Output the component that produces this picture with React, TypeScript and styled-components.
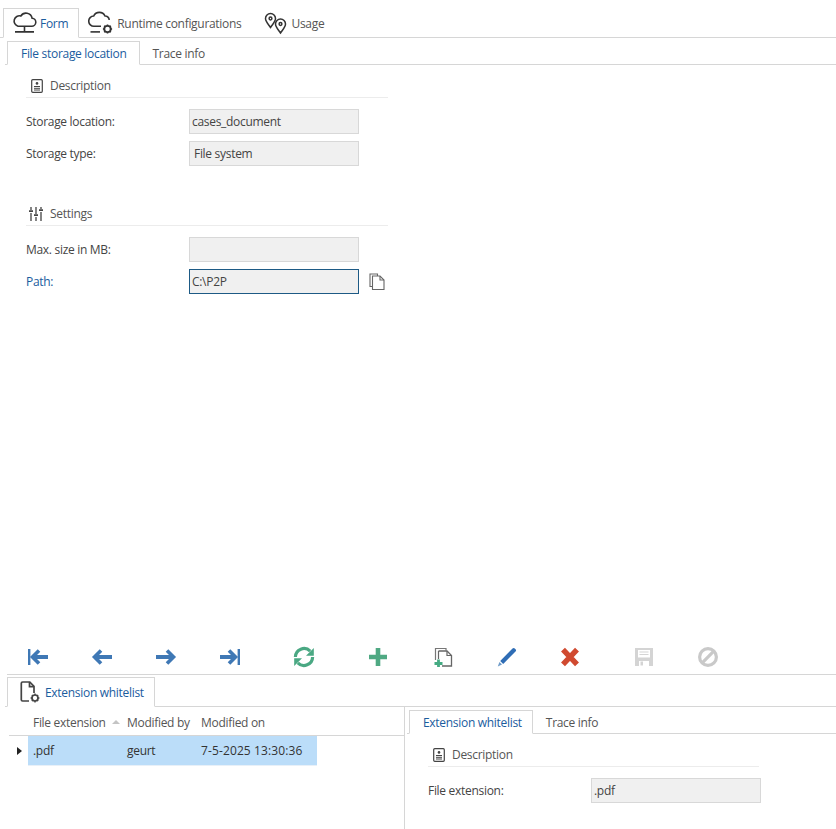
import * as React from "react";
import styled, { createGlobalStyle } from "styled-components";

const GlobalStyle = createGlobalStyle`
  html, body {
    margin: 0;
    padding: 0;
    background: #fff;
  }
  body {
    font-family: "Open Sans", "Noto Sans", sans-serif;
    font-size: 12px;
    letter-spacing: -0.3px;
    color: #444;
  }
  * {
    box-sizing: border-box;
  }
`;

const Page = styled.div`
  width: 836px;
  height: 829px;
  display: flex;
  flex-direction: column;
  overflow: hidden;
`;

const TopArea = styled.div`
  flex: 1;
  min-height: 0;
`;

const MainTabs = styled.div`
  display: flex;
  align-items: flex-end;
  height: 38px;
  padding: 8px 0 0 3px;
  border-bottom: 1px solid #d6d6d6;
`;

const MainTab = styled.div<{ $active?: boolean; $pad: number }>`
  display: flex;
  align-items: center;
  height: 30px;
  padding: 0 10px 0 ${(p) => p.$pad}px;
  margin-bottom: -1px;
  border: 1px solid ${(p) => (p.$active ? "#d6d6d6" : "transparent")};
  border-bottom-color: ${(p) => (p.$active ? "#fff" : "transparent")};
  color: ${(p) => (p.$active ? "#1b5c9e" : "#555")};
  white-space: nowrap;

  svg {
    margin-right: 3px;
    flex: none;
  }
`;

const SubTabs = styled.div<{ $top: number; $left: number }>`
  display: flex;
  align-items: flex-end;
  margin: ${(p) => p.$top}px 0 0 ${(p) => p.$left}px;
  padding-left: 2px;
  border-bottom: 1px solid #d6d6d6;
`;

const SubTab = styled.div<{ $active?: boolean; $right?: number }>`
  display: flex;
  align-items: center;
  height: 24px;
  padding: 0 ${(p) => p.$right ?? 12}px 0 ${(p) => (p.$active ? 13 : 12)}px;
  margin-bottom: -1px;
  border: 1px solid ${(p) => (p.$active ? "#d6d6d6" : "transparent")};
  border-bottom-color: ${(p) => (p.$active ? "#fff" : "transparent")};
  color: ${(p) => (p.$active ? "#1b5c9e" : "#555")};
  white-space: nowrap;
`;

const Section = styled.section<{ $top: number; $left: number; $width: number }>`
  width: ${(p) => p.$width}px;
  margin: ${(p) => p.$top}px 0 0 ${(p) => p.$left}px;
`;

const SectionHead = styled.div<{ $iconWidth: number; $iconLeft: number }>`
  display: flex;
  align-items: center;
  height: 22px;
  padding: 0 0 2px ${(p) => p.$iconLeft}px;
  margin-bottom: 11px;
  border-bottom: 1px solid #ececec;
  color: #555;

  svg {
    width: ${(p) => p.$iconWidth}px;
    flex: none;
    margin-right: 7px;
  }
`;

const FormRow = styled.div`
  display: flex;
  align-items: center;
  height: 25px;
  margin-bottom: 7px;
`;

const Label = styled.label<{ $accent?: boolean; $width: number }>`
  width: ${(p) => p.$width}px;
  flex: none;
  color: ${(p) => (p.$accent ? "#1b5c9e" : "#444")};
`;

const Field = styled.div<{ $focused?: boolean; $indent?: number }>`
  width: 170px;
  height: 25px;
  flex: none;
  display: flex;
  align-items: center;
  padding-left: ${(p) => p.$indent ?? 2}px;
  background: #f0f0f0;
  border: 1px solid ${(p) => (p.$focused ? "#1d5a85" : "#d8d8d8")};
  color: #444;
`;

const CopyButton = styled.span`
  display: flex;
  margin-left: 10px;
`;

const Toolbar = styled.div`
  display: flex;
  align-items: center;
  height: 35px;
  margin-left: 7px;
  border-bottom: 1px solid #d6d6d6;
`;

const ToolButton = styled.span<{ $left?: number }>`
  width: 24px;
  height: 24px;
  flex: none;
  margin-left: ${(p) => p.$left ?? 40}px;
  display: flex;
`;

const BottomArea = styled.div`
  height: 154px;
  display: flex;
  flex-direction: column;
`;

const BottomTabs = styled.div`
  display: flex;
  align-items: flex-end;
  height: 32px;
  flex: none;
  margin-left: 5px;
  padding-left: 2px;
  border-bottom: 1px solid #d6d6d6;
`;

const BottomTab = styled.div`
  display: flex;
  align-items: center;
  height: 30px;
  padding: 0 10px 0 12px;
  margin-bottom: -1px;
  border: 1px solid #d6d6d6;
  border-bottom-color: #fff;
  color: #1b5c9e;

  svg {
    margin-right: 5px;
  }
`;

const Split = styled.div`
  flex: 1;
  display: flex;
  min-height: 0;
`;

const GridPane = styled.div`
  width: 405px;
  flex: none;
  border-right: 1px solid #d6d6d6;
  padding-left: 9px;
`;

const DetailPane = styled.div`
  flex: 1;
`;

const GridHeader = styled.div`
  display: flex;
  align-items: center;
  height: 29px;
  padding: 2px 0 0 24px;
  border-bottom: 1px solid #d6d6d6;
  color: #555;
`;

const HeaderCell = styled.div<{ $width: number }>`
  width: ${(p) => p.$width}px;
  flex: none;
  display: flex;
  align-items: center;
  white-space: nowrap;
`;

const SortArrow = styled.span`
  width: 0;
  height: 0;
  margin-left: 6px;
  border-left: 4px solid transparent;
  border-right: 4px solid transparent;
  border-bottom: 4px solid #c4c4c4;
`;

const GridRow = styled.div`
  display: flex;
  align-items: center;
`;

const RowMarker = styled.span`
  width: 19px;
  flex: none;
  display: flex;
  justify-content: flex-end;
  padding-right: 6px;

  &::before {
    content: "";
    border-top: 4.5px solid transparent;
    border-bottom: 4.5px solid transparent;
    border-left: 5px solid #222;
  }
`;

const SelectedCells = styled.div`
  width: 289px;
  height: 30px;
  display: flex;
  align-items: center;
  padding-left: 5px;
  background: #bbddf9;
  border-bottom: 1px solid #e8f0f8;
  color: #333;
`;

const Cell = styled.div<{ $width: number; $spacing?: number }>`
  width: ${(p) => p.$width}px;
  flex: none;
  white-space: nowrap;
  letter-spacing: ${(p) => p.$spacing ?? -0.3}px;
`;

const CloudIcon = () => (
  <svg width="25" height="24" viewBox="0 0 25 24" fill="none" stroke="#333" strokeWidth="1.6">
    <path d="M6 15.2h13.5a4 4 0 0 0 .6-8A6.2 6.2 0 0 0 8.8 5 5.1 5.1 0 0 0 6 15.2z" />
    <path d="M12.5 15.5v5M3 20.9h19" />
  </svg>
);

const CloudGearIcon = () => (
  <svg width="26" height="24" viewBox="0 0 26 24" fill="none" stroke="#333" strokeWidth="1.6">
    <path d="M13 15.2H6a5.1 5.1 0 0 1-.3-10.2A6.2 6.2 0 0 1 17 5a4 4 0 0 1 4.2 4" />
    <path d="M2.5 20.9H12" />
    <circle cx="19.5" cy="18" r="3.2" strokeWidth="1.8" />
    <path d="M19.5 13.4v1.4M19.5 21.2v1.4M14.9 18h1.4M22.7 18h1.4M16.2 14.7l1 1M21.8 20.3l1 1M16.2 21.3l1-1M21.8 15.7l1-1" strokeWidth="1.6" />
  </svg>
);

const PinsIcon = () => (
  <svg width="24" height="24" viewBox="0 0 24 24" fill="none" stroke="#333" strokeWidth="1.5">
    <path d="M6.5 2.5a5 5 0 0 0-5 5c0 3 3 6 5 9 2-3 5-6 5-9a5 5 0 0 0-5-5z" />
    <circle cx="6.5" cy="7.5" r="1.4" />
    <path d="M16.5 8a5 5 0 0 0-5 5c0 3 3 6 5 9 2-3 5-6 5-9a5 5 0 0 0-5-5z" />
    <circle cx="16.5" cy="13" r="1.4" />
  </svg>
);

const ContactDocIcon = () => (
  <svg height="14" viewBox="0 0 12 14" fill="none" stroke="#444">
    <rect x="0.7" y="0.7" width="10.6" height="12.6" rx="1" strokeWidth="1.2" />
    <circle cx="6" cy="4.4" r="1.3" fill="#444" stroke="none" />
    <path d="M3 7.5h6M3 9.3h6M3 11h6" strokeWidth="1" />
  </svg>
);

const SlidersIcon = () => (
  <svg height="16" viewBox="0 0 14 16" fill="none" stroke="#444" strokeWidth="1.3">
    <path d="M2 1v3M2 7v8M7 1v7M7 11v4M12 1v2M12 6v9" />
    <path d="M0 5.2h4M5 9.2h4M10 4.2h4" strokeWidth="1.8" />
  </svg>
);

const CopyIcon = () => (
  <svg width="16" height="17" viewBox="0 0 16 17" fill="none" stroke="#666" strokeWidth="1.1">
    <path d="M3 13.5H1V1h7.5v2" />
    <path d="M3.5 3h7.5l4 4v9.5H3.5z" />
    <path d="M11 3v4h4" />
  </svg>
);

const DocGearIcon = () => (
  <svg width="20" height="22" viewBox="0 0 20 22" fill="none" stroke="#444" strokeWidth="1.7">
    <path d="M9 20H2.6a1.3 1.3 0 0 1-1.3-1.3V2.3A1.3 1.3 0 0 1 2.6 1h7.2l4.2 4.4V12" />
    <path d="M9.5 1v4.6H14" />
    <circle cx="15" cy="17" r="3" strokeWidth="1.7" />
    <path d="M15 12.6v1.4M15 20v1.4M10.6 17H12M18 17h1.4M11.9 13.9l1 1M17.1 19.1l1 1M11.9 20.1l1-1M17.1 14.9l1-1" strokeWidth="1.4" />
  </svg>
);

const BLUE = "#3f78b5";

const NavIcon = ({ flip, bar }: { flip?: boolean; bar?: boolean }) => (
  <svg
    width="24"
    height="24"
    viewBox="0 0 24 24"
    fill="none"
    stroke={BLUE}
    style={flip ? { transform: "scaleX(-1)" } : undefined}
  >
    {bar && <path d="M3.2 4v16" strokeWidth="2.4" />}
    <path d={bar ? "M6 12h16" : "M4 12h18"} strokeWidth="4" />
    <path d={bar ? "M13 5.5 6.5 12l6.5 6.5" : "M11 5.5 4.5 12l6.5 6.5"} strokeWidth="3.6" />
  </svg>
);

const RefreshIcon = () => (
  <svg width="24" height="24" viewBox="0 0 24 24" fill="none" stroke="#4aa883" strokeWidth="3.2">
    <path d="M3.4 12a8.6 8.6 0 0 1 14.8-5.8" />
    <path d="M20.6 12a8.6 8.6 0 0 1-14.8 5.8" />
    <path d="M21.8 3v7.8H14z" fill="#4aa883" stroke="none" />
    <path d="M2.2 21v-7.8H10z" fill="#4aa883" stroke="none" />
  </svg>
);

const PlusIcon = () => (
  <svg width="24" height="24" viewBox="0 0 24 24" fill="#4fa983">
    <path d="M9.7 3h4.6v6.7H21v4.6h-6.7V21H9.7v-6.7H3V9.7h6.7z" />
  </svg>
);

const CopyAddIcon = () => (
  <svg width="24" height="24" viewBox="0 0 24 24" fill="none">
    <path d="M4.5 15V3.5h10.5v2" stroke="#777" strokeWidth="1.2" />
    <path d="M7.5 6h8.5l4.5 4.5v10.5H11" stroke="#666" strokeWidth="1.3" />
    <path d="M7.5 6v8M16 6v4.5h4.5" stroke="#666" strokeWidth="1.2" />
    <path d="M7.5 14.5v7.5M3.5 18.5h8" stroke="#45ab83" strokeWidth="2.8" />
  </svg>
);

const PencilIcon = () => (
  <svg width="24" height="24" viewBox="0 0 24 24" fill="#2f6db5">
    <path d="M17.5 3.6a1.6 1.6 0 0 1 2.3 0l.7.7a1.6 1.6 0 0 1 0 2.3L8.2 18.9l-3-3z" />
    <path d="M4.4 17 7 19.6l-4.2 1.8z" fill="#6f9cc9" />
  </svg>
);

const CrossIcon = () => (
  <svg width="24" height="24" viewBox="0 0 24 24" fill="none" stroke="#d04a30" strokeWidth="5.4">
    <path d="M5 4.6 19 19.4M19 4.6 5 19.4" />
  </svg>
);

const SaveIcon = () => (
  <svg width="24" height="24" viewBox="0 0 24 24" fill="#d4d4d4">
    <path d="M3 3h18v18H3z" />
    <path d="M6 5h12v7.5H6z" fill="#fff" />
    <path d="M7.5 7h9M7.5 9.5h9" stroke="#d4d4d4" strokeWidth="1.2" />
    <path d="M7 16h10v5H7z" fill="#fff" />
    <path d="M8.5 16.5h2.5v4H8.5z" />
  </svg>
);

const BanIcon = () => (
  <svg width="24" height="24" viewBox="0 0 24 24" fill="none" stroke="#c9c9c9" strokeWidth="3.2">
    <circle cx="12" cy="12" r="8.4" />
    <path d="M6.2 17.8 17.8 6.2" />
  </svg>
);

const App = () => (
  <Page>
    <GlobalStyle />
    <TopArea>
      <MainTabs>
        <MainTab $active $pad={8}>
          <CloudIcon />
          Form
        </MainTab>
        <MainTab $pad={8}>
          <CloudGearIcon />
          Runtime configurations
        </MainTab>
        <MainTab $pad={11}>
          <PinsIcon />
          Usage
        </MainTab>
      </MainTabs>
      <SubTabs $top={3} $left={5}>
        <SubTab $active>File storage location</SubTab>
        <SubTab>Trace info</SubTab>
      </SubTabs>
      <Section $top={11} $left={26} $width={362}>
        <SectionHead $iconWidth={12} $iconLeft={5}>
          <ContactDocIcon />
          Description
        </SectionHead>
        <FormRow>
          <Label $width={163}>Storage location:</Label>
          <Field>cases_document</Field>
        </FormRow>
        <FormRow>
          <Label $width={163}>Storage type:</Label>
          <Field $indent={4}>File system</Field>
        </FormRow>
      </Section>
      <Section $top={38} $left={26} $width={362}>
        <SectionHead $iconWidth={14} $iconLeft={3}>
          <SlidersIcon />
          Settings
        </SectionHead>
        <FormRow>
          <Label $width={163}>Max. size in MB:</Label>
          <Field />
        </FormRow>
        <FormRow>
          <Label $width={163} $accent>
            Path:
          </Label>
          <Field $focused>C:\P2P</Field>
          <CopyButton>
            <CopyIcon />
          </CopyButton>
        </FormRow>
      </Section>
    </TopArea>
    <Toolbar>
      <ToolButton $left={19}>
        <NavIcon bar />
      </ToolButton>
      <ToolButton>
        <NavIcon />
      </ToolButton>
      <ToolButton>
        <NavIcon flip />
      </ToolButton>
      <ToolButton>
        <NavIcon flip bar />
      </ToolButton>
      <ToolButton $left={50}>
        <RefreshIcon />
      </ToolButton>
      <ToolButton $left={50}>
        <PlusIcon />
      </ToolButton>
      <ToolButton $left={41}>
        <CopyAddIcon />
      </ToolButton>
      <ToolButton>
        <PencilIcon />
      </ToolButton>
      <ToolButton $left={39}>
        <CrossIcon />
      </ToolButton>
      <ToolButton $left={50}>
        <SaveIcon />
      </ToolButton>
      <ToolButton>
        <BanIcon />
      </ToolButton>
    </Toolbar>
    <BottomArea>
      <BottomTabs>
        <BottomTab>
          <DocGearIcon />
          Extension whitelist
        </BottomTab>
      </BottomTabs>
      <Split>
        <GridPane>
          <GridHeader>
            <HeaderCell $width={94}>
              File extension
              <SortArrow />
            </HeaderCell>
            <HeaderCell $width={74}>Modified by</HeaderCell>
            <HeaderCell $width={90}>Modified on</HeaderCell>
          </GridHeader>
          <GridRow>
            <RowMarker />
            <SelectedCells>
              <Cell $width={94}>.pdf</Cell>
              <Cell $width={74}>geurt</Cell>
              <Cell $width={110} $spacing={0.12}>
                7-5-2025 13:30:36
              </Cell>
            </SelectedCells>
          </GridRow>
        </GridPane>
        <DetailPane>
          <SubTabs $top={3} $left={2}>
            <SubTab $active $right={10}>
              Extension whitelist
            </SubTab>
            <SubTab>Trace info</SubTab>
          </SubTabs>
          <Section $top={11} $left={23} $width={331}>
            <SectionHead $iconWidth={12} $iconLeft={5}>
              <ContactDocIcon />
              Description
            </SectionHead>
            <FormRow>
              <Label $width={163}>File extension:</Label>
              <Field>.pdf</Field>
            </FormRow>
          </Section>
        </DetailPane>
      </Split>
    </BottomArea>
  </Page>
);

export default App;
